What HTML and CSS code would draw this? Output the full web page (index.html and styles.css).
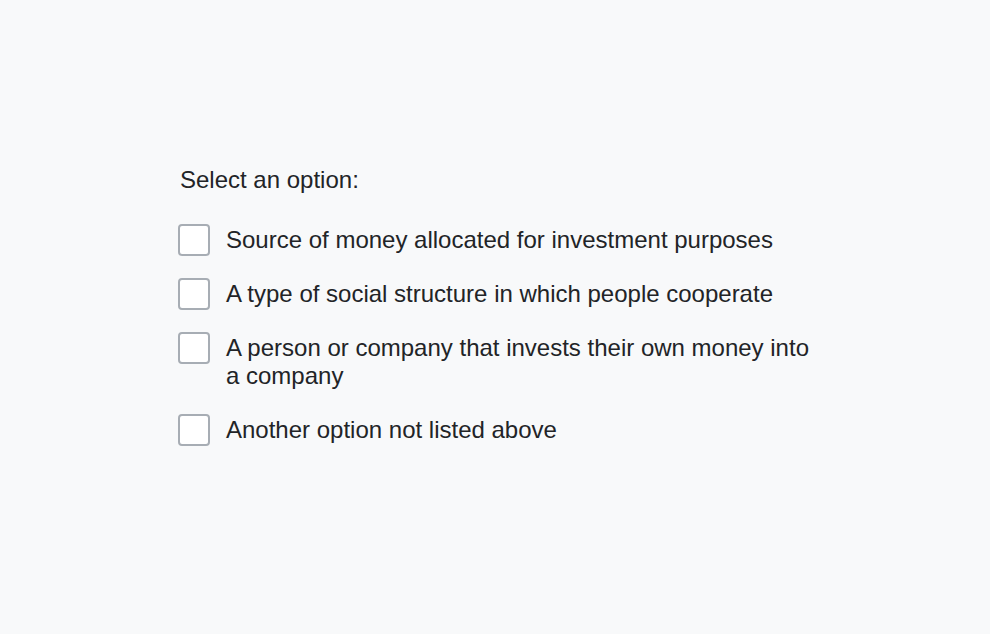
FILE: index.html
```html
<!DOCTYPE html>
<html lang="en">
<head>
<meta charset="utf-8">
<title>Select an option</title>
<link rel="stylesheet" href="styles.css">
</head>
<body>
<main class="page">
  <section class="question">
    <p class="prompt">Select an option:</p>
    <ul class="options">
      <li class="option"><span class="box"></span><span class="label">Source of money allocated for investment purposes</span></li>
      <li class="option"><span class="box"></span><span class="label">A type of social structure in which people cooperate</span></li>
      <li class="option"><span class="box"></span><span class="label">A person or company that invests their own money into a company</span></li>
      <li class="option"><span class="box"></span><span class="label">Another option not listed above</span></li>
    </ul>
  </section>
</main>
</body>
</html>
```
FILE: styles.css
```css
html, body {
  margin: 0;
  padding: 0;
  background: #f8f9fa;
}
body {
  font-family: "Liberation Sans", Arial, sans-serif;
  color: #222427;
  font-size: 24px;
}
.page {
  height: 634px;
  padding: 166px 0 0 178px;
  box-sizing: border-box;
}
.question {
  width: 640px;
}
.prompt {
  margin: 0 0 30px 2px;
  line-height: 28px;
}
.options {
  list-style: none;
  margin: 0;
  padding: 0;
  display: flex;
  flex-direction: column;
  gap: 22px;
}
.option {
  display: flex;
  align-items: flex-start;
  gap: 16px;
}
.box {
  flex: none;
  width: 32px;
  height: 32px;
  box-sizing: border-box;
  border: 2px solid #a7adb4;
  border-radius: 4px;
  background: #ffffff;
}
.label {
  padding: 2px 0;
  line-height: 28px;
}
```
